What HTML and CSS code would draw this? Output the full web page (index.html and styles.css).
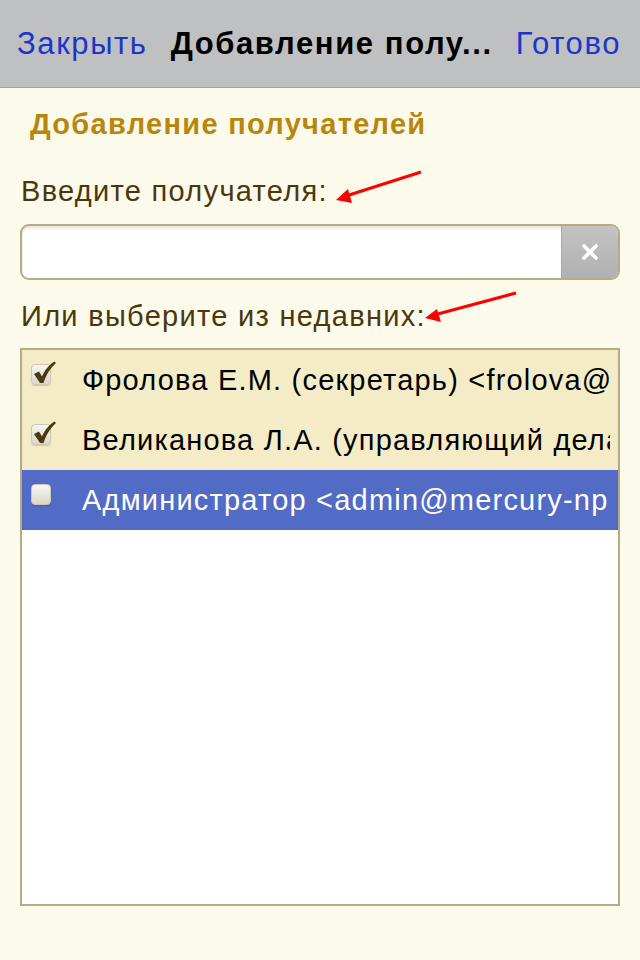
FILE: index.html
```html
<!DOCTYPE html>
<html lang="ru">
<head>
<meta charset="utf-8">
<title>Добавление получателей</title>
<link rel="stylesheet" href="styles.css">
</head>
<body>
<header class="navbar">
  <span class="nav-btn">Закрыть</span>
  <span class="nav-title">Добавление полу...</span>
  <span class="nav-btn">Готово</span>
</header>
<main class="content">
  <h1 class="section-title">Добавление получателей</h1>
  <div class="label first">Введите получателя:</div>
  <div class="search">
    <div class="search-field"></div>
    <div class="search-clear">
      <svg width="18" height="18" viewBox="0 0 18 18"><path d="M3 3 L15 15 M15 3 L3 15" stroke="#fff" stroke-width="3.6" stroke-linecap="round"/></svg>
    </div>
  </div>
  <div class="label second">Или выберите из недавних:</div>
  <div class="list">
    <div class="row checked">
      <span class="cb"><svg class="tick" width="26" height="26" viewBox="0 0 26 26"><path d="M3 13 L8 10.5 L11 15.5 C14 8.5 18 4 23.5 0.5 L25 2 C19.5 7 15.5 13 12.5 22 L9 22 Z" fill="#4a3a12"/></svg></span>
      <span class="row-text">Фролова Е.М. (секретарь) &lt;frolova@</span>
    </div>
    <div class="row checked">
      <span class="cb"><svg class="tick" width="26" height="26" viewBox="0 0 26 26"><path d="M3 13 L8 10.5 L11 15.5 C14 8.5 18 4 23.5 0.5 L25 2 C19.5 7 15.5 13 12.5 22 L9 22 Z" fill="#4a3a12"/></svg></span>
      <span class="row-text">Великанова Л.А. (управляющий дела</span>
    </div>
    <div class="row selected">
      <span class="cb"></span>
      <span class="row-text">Администратор &lt;admin@mercury-np</span>
    </div>
  </div>
</main>
<svg class="arrows" width="640" height="960" viewBox="0 0 640 960">
  <line x1="421" y1="172" x2="346" y2="196" stroke="#f00" stroke-width="3"/>
  <polygon points="336,200 348,189 352,203" fill="#f00"/>
  <line x1="516" y1="293" x2="434" y2="315" stroke="#f00" stroke-width="3"/>
  <polygon points="425,318 437,309 441,322" fill="#f00"/>
</svg>
</body>
</html>
```
FILE: styles.css
```css
html, body {
  margin: 0;
  padding: 0;
}
body {
  width: 640px;
  height: 960px;
  background: #fcfaeb;
  font-family: "Liberation Sans", Arial, Helvetica, sans-serif;
  position: relative;
  overflow: hidden;
}
.navbar {
  height: 88px;
  box-sizing: border-box;
  background: #bfc0c2;
  border-bottom: 1px solid #a3a49c;
  display: flex;
  align-items: center;
  justify-content: space-between;
  padding: 0 19px 0 17px;
  font-size: 31px;
  line-height: 34px;
  letter-spacing: 1.6px;
}
.nav-btn {
  color: #1b35c9;
}
.nav-title {
  color: #000;
  font-weight: bold;
  flex: 1;
  text-align: center;
  white-space: nowrap;
}
.content {
  padding: 0 20px;
}
.section-title {
  margin: 20px 0 0 10px;
  font-size: 29px;
  line-height: 32px;
  letter-spacing: 1.3px;
  font-weight: bold;
  color: #b7860b;
}
.label {
  font-size: 29px;
  line-height: 32px;
  letter-spacing: 1.3px;
  color: #4a380c;
  margin-left: 1px;
}
.label.first {
  margin-top: 35px;
}
.label.second {
  margin-top: 20px;
}
.search {
  margin-top: 17px;
  height: 56px;
  box-sizing: border-box;
  border: 2px solid #b7ab82;
  border-radius: 9px;
  display: flex;
  overflow: hidden;
  background: #fff;
  box-shadow: inset 0 2px 3px rgba(0,0,0,0.12);
}
.search-field {
  flex: 1;
}
.search-clear {
  width: 56px;
  background: linear-gradient(#c3c3c3, #b1b1b1);
  border-left: 1px solid #a9a9a9;
  display: flex;
  align-items: center;
  justify-content: center;
}
.list {
  margin-top: 16px;
  height: 558px;
  box-sizing: border-box;
  border: 2px solid #b3ab82;
  background: #fff;
  overflow: hidden;
}
.row {
  height: 60px;
  display: flex;
  align-items: flex-start;
  padding-left: 9px;
  padding-right: 8px;
  font-size: 29px;
  line-height: 60px;
  letter-spacing: 1.2px;
  color: #000;
  white-space: nowrap;
  overflow: hidden;
}
.row.checked {
  background: #f4ecc7;
}
.row.selected {
  background: #526bc4;
  color: #fff;
}
.cb {
  flex: none;
  position: relative;
  width: 20px;
  height: 21px;
  margin-top: 14px;
  box-sizing: border-box;
  border: 1px solid #cfc7ae;
  border-radius: 4px;
  background: linear-gradient(#f7f6f2, #d9d6cc);
  box-shadow: 0 1px 1px rgba(0,0,0,0.15);
}
.tick {
  position: absolute;
  left: -1px;
  top: -4px;
}
.row-text {
  margin-left: 31px;
  overflow: hidden;
  flex: 1;
}
.arrows {
  position: absolute;
  left: 0;
  top: 0;
  pointer-events: none;
}
```
